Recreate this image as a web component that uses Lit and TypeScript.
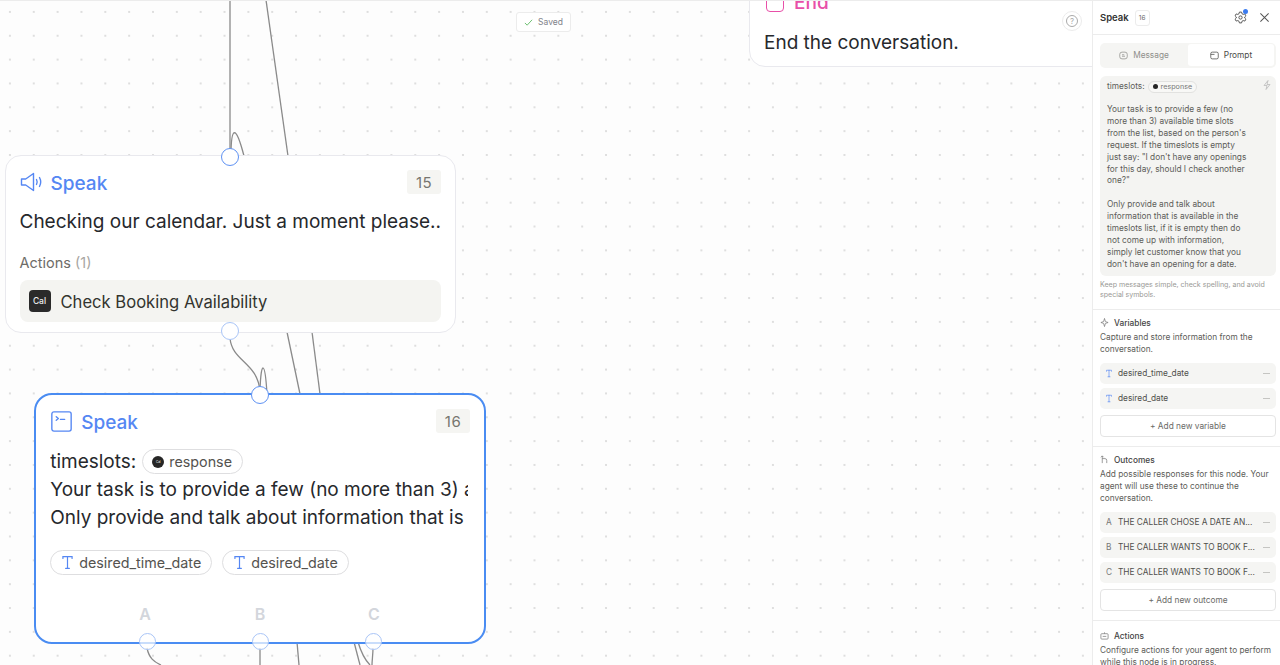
import { LitElement, html, css, svg } from "lit";
import { customElement } from "lit/decorators.js";

const speaker = html`<svg class="ic24" viewBox="0 0 24 24" fill="none" stroke="currentColor" stroke-width="1.4" stroke-linejoin="round" stroke-linecap="round"><path d="M1.5 9h4.2L13.5 3.5v17L5.700 15H1.500z"/><path d="M16.500 9.500c.8 1.500.8 3.500 0 5"/><path d="M19.500 7.500c1.500 2.800 1.500 6.200 0 9"/></svg>`;
const terminal = html`<svg class="ic20" viewBox="0 0 20 20" fill="none" stroke="currentColor" stroke-width="1.300" stroke-linecap="round" stroke-linejoin="round"><rect x=".8" y=".8" width="18.400" height="18.400" rx="2"/><path d="M5 5.500l2 1.700-2 1.700M9 8h4"/></svg>`;
const tIcon = html`<svg class="t" viewBox="0 0 12 16" fill="none" stroke="currentColor" stroke-width="1.300" stroke-linecap="round"><path d="M1 3.500V1.500h10v2M6 1.500v13M4 14.500h4"/></svg>`;
const calChip = html`<span class="cal">Cal</span>`;

const rows = ["desired_time_date", "desired_date"];
const outcomes: [string, string][] = [
  ["A", "THE CALLER CHOSE A DATE AN..."],
  ["B", "THE CALLER WANTS TO BOOK F..."],
  ["C", "THE CALLER WANTS TO BOOK F..."],
];

@customElement("app-root")
export class AppRoot extends LitElement {
  static styles = css`
    :host { display: flex; width: 1280px; height: 665px; overflow: hidden; background: #fff; font-family: Inter, "Liberation Sans", sans-serif; color: #26282c; }
    * { box-sizing: border-box; }
    .canvas { position: relative; flex: 1; height: 665px; overflow: hidden; background-color: #fdfdfd; background-image: radial-gradient(circle, #cfcfcf 0.6px, transparent 0.9px); background-size: 23.85px 23.85px; background-position: -2px -1px; border-top: 1px solid #ececec; }
    .edges { position: absolute; left: 0; top: -1px; width: 1092px; height: 665px; }
    .node { position: absolute; background: #fff; border: 1px solid #e9e9ee; border-radius: 16px; }
    .n15 { left: 4.500px; top: 154px; width: 451.500px; height: 178px; padding: 14px 14px 0 14px; }
    .n16 { left: 34px; top: 392px; width: 452px; height: 251px; border: 2.800px solid #4a8cf2; border-radius: 18px; padding: 14px 14px 0 14.200px; }
    .end { left: 749px; top: -40px; width: 360px; height: 106px; padding: 0 14px; }
    .head { display: flex; align-items: center; gap: 7px; height: 24px; color: #5587f3; font-size: 19px; font-weight: 500; }
    .lbl { padding-top: 2px; }
    .ic24 { width: 24px; height: 24px; flex: none; }
    .ic20 { width: 21px; height: 21px; flex: none; margin: 0 2px 0 1px; }
    .num { margin-left: auto; width: 34px; height: 24px; background: #f5f5f2; border-radius: 3px; color: #77756f; font-size: 15px; font-weight: 400; display: flex; align-items: center; justify-content: center; letter-spacing: .5px; }
    .msg { margin-top: 14px; font-size: 19px; line-height: 28px; white-space: nowrap; color: #26282c; }
    .acts { margin-top: 17px; font-size: 14.500px; line-height: 20px; color: #6e6c68; }
    .acts span { color: #a8a6a2; }
    .actrow { margin-top: 7px; height: 42px; background: #f4f4f1; border-radius: 8px; display: flex; align-items: center; gap: 10px; padding-left: 9px; font-size: 16.600px; color: #33342f; width: 421px; }
    .actlabel { padding-top: 1px; }
    .cal { width: 22px; height: 22px; border-radius: 4px; background: #2a2a2a; color: #eee; font-size: 8.500px; font-weight: 500; display: flex; align-items: center; justify-content: center; }
    .body16 { margin-top: 14px; width: 418px; overflow: hidden; font-size: 19px; line-height: 28px; white-space: nowrap; }
    .tsrow { display: flex; align-items: center; gap: 6px; height: 29px; }
    .pill { display: inline-flex; align-items: center; height: 25px; border: 1px solid #dedee0; border-radius: 13px; color: #54534f; font-size: 14.300px; background: #fff; }
    .pill .dot { width: 12px; height: 12px; border-radius: 50%; background: #262626; color: #fff; font-size: 3px; display: flex; align-items: center; justify-content: center; margin-right: 5px; margin-left: 9px; }
    .resp { width: 101px; }
    .tags { margin-top: 18px; display: flex; gap: 10px; }
    .tags .pill { padding: 0 10px 0 11px; gap: 6px; }
    .t { width: 11px; height: 15px; color: #5587f3; flex: none; }
    .letter { position: absolute; top: 209px; width: 20px; text-align: center; font-size: 16px; font-weight: 600; color: #d3d6dc; }
    .la { left: 99px; } .lb { left: 214px; } .lc { left: 328px; }
    .h { position: absolute; width: 18px; height: 18px; border-radius: 50%; background: #fff; border: 1.500px solid #5f92f3; }
    .h1 { left: 221px; top: 147px; }
    .h2 { left: 221px; top: 321px; border-color: #a9c5f7; }
    .h3 { left: 251px; top: 385px; }
    .hb { top: 631.500px; background: rgba(255,255,255,.7); border-color: #a9c5f7; width: 17px; height: 17px; }
    .ha { left: 138.500px; } .hbb { left: 251.500px; } .hc { left: 364.500px; }
    .endhead { position: absolute; left: 16px; top: 29px; display: flex; align-items: center; gap: 10px; color: #e84fa8; font-size: 19px; font-weight: 500; line-height: 24px; }
    .endbox { width: 18px; height: 18px; border: 1.500px solid #e84fa8; border-radius: 4px; }
    .endtxt { position: absolute; left: 14px; top: 67px; font-size: 19px; line-height: 28px; }
    .help { position: absolute; left: 1062px; top: 10px; width: 20px; height: 20px; border-radius: 50%; background: #fff; border: 1px solid #ececec; display: flex; align-items: center; justify-content: center; color: #aaa; }
    .help i { width: 12px; height: 12px; border: 1px solid #aaa; border-radius: 50%; font-size: 8px; line-height: 10px; text-align: center; font-style: normal; }
    .saved { position: absolute; left: 516px; top: 11px; width: 55px; height: 20px; background: #fff; border: 1px solid #ececec; border-radius: 3px; display: flex; align-items: center; justify-content: center; gap: 5px; font-size: 8.500px; color: #81838a; }
    .saved svg { width: 9px; height: 9px; color: #6cc070; }

    .panel { width: 188px; flex: none; height: 665px; overflow: hidden; background: #fff; border-left: 1px solid #ececec; border-top: 1px solid #ececec; font-size: 8.300px; color: #5d5d59; }
    .phead { height: 34px; border-bottom: 1px solid #ececec; display: flex; align-items: center; padding: 0 10px 0 7px; }
    .ptitle { font-size: 9.500px; font-weight: 600; color: #333; }
    .pnum { margin-left: 6px; width: 15px; height: 16px; border: 1px solid #ececec; border-radius: 3px; font-size: 6.500px; color: #666; display: flex; align-items: center; justify-content: center; }
    .gearwrap { position: relative; margin-left: auto; width: 13px; height: 13px; color: #555; }
    .gearwrap svg { width: 13px; height: 13px; display: block; }
    .gearwrap b { position: absolute; right: -1px; top: -2px; width: 5px; height: 5px; border-radius: 50%; background: #3b7cf0; }
    .x { margin-left: 12px; width: 11px; height: 11px; color: #555; }
    .ppad { padding: 8px 4px 0 7px; }
    .tabs { display: flex; height: 25px; background: #f5f5f3; border-radius: 5px; padding: 1px 2px 2px 0; }
    .tab { flex: 1; display: flex; align-items: center; justify-content: center; gap: 5px; font-size: 8.300px; color: #8f8f8b; border-radius: 3px; }
    .tab svg { width: 9px; height: 9px; }
    .tab.on { background: #fff; color: #4a4a47; width: 86px; flex: none; }
    .box { position: relative; margin-top: 8px; height: 200px; background: #f4f4f2; border-radius: 6px; padding: 4px 7px; line-height: 11.900px; color: #5d5d59; }
    .boxts { display: flex; align-items: center; gap: 3px; height: 13px; }
    .smallpill { display: inline-flex; align-items: center; gap: 3px; height: 12px; border: 1px solid #e2e2e0; background: #f8f8f6; border-radius: 6px; padding: 0 4px; font-size: 7.200px; color: #777; }
    .smallpill i { width: 5px; height: 5px; border-radius: 50%; background: #262626; }
    .boxp { margin: 11px 0 0; white-space: pre-line; }
    .bolt { position: absolute; right: 5px; top: 4px; width: 8px; height: 10px; color: #bbb; }
    .help2 { margin: 4px 0 0; font-size: 7.050px; line-height: 9.800px; color: #9a9a96; }
    .sec { border-top: 1px solid #ececec; padding: 7px 4px 0 7px; }
    .s1 { margin-top: 9px; height: 137px; }
    .s2 { height: 174px; }
    .s3 { height: 60px; padding-top: 9px; }
    .stitle { display: flex; align-items: center; gap: 5px; height: 12px; font-size: 8.300px; font-weight: 500; color: #444; margin-bottom: 2px; }
    .stitle svg { width: 9px; height: 9px; color: #777; flex: none; }
    .desc { line-height: 12px; margin: 0; }
    .rows { display: flex; flex-direction: column; gap: 4px; margin-top: 8px; }
    .row { height: 21px; background: #f5f5f3; border-radius: 5px; display: flex; align-items: center; padding: 0 6px; gap: 6px; font-size: 8.300px; color: #4f4f4b; white-space: nowrap; }
    .row .t { width: 6px; height: 9px; }
    .row em { margin-left: auto; width: 7px; height: 1px; background: #c5c5c2; }
    .ltr { color: #777; width: 6px; }
    .add { margin-top: 6px; height: 22px; width: 176px; border: 1px solid #e4e4e4; border-radius: 4px; background: #fff; display: flex; align-items: center; justify-content: center; font-size: 8.300px; color: #6a6a67; }
  `;

  render() {
    return html`
      <div class="canvas">
        <svg class="edges" viewBox="0 0 1092 665" fill="none" stroke="#8a8a8a" stroke-width="1.300">
          ${svg`<path d="M230 0V156"/>
          <path d="M266 0L288 156"/>
          <path d="M231 156C231 125 236 125 244 156"/>
          <path d="M230 338C232 362 258 362 260 392"/>
          <path d="M260 390C261 360 265 360 267 394"/>
          <path d="M287 332L300 394"/>
          <path d="M312 332L320 394"/>
          <path d="M147 648C149 658 154 662 161 665"/>
          <path d="M260 648V665"/>
          <path d="M297 642L299 665"/>
          <path d="M354 642L360 665"/>
          <path d="M358 642C361 652 365 660 370 665"/>
          <path d="M373 648C373 655 372 660 372 665"/>`}
        </svg>

        <div class="saved"><svg viewBox="0 0 10 10" fill="none" stroke="currentColor" stroke-width="1.100"><path d="M1 5.500l2.500 2.500L9 2"/></svg>Saved</div>

        <div class="node end">
          <div class="endhead"><span class="endbox"></span>End</div>
          <div class="endtxt">End the conversation.</div>
        </div>
        <div class="help"><i>?</i></div>

        <div class="node n15">
          <div class="head">${speaker}<span class="lbl">Speak</span><span class="num">15</span></div>
          <div class="msg">Checking our calendar. Just a moment please..</div>
          <div class="acts">Actions <span>(1)</span></div>
          <div class="actrow">${calChip}<span class="actlabel">Check Booking Availability</span></div>
        </div>

        <div class="node n16">
          <div class="head">${terminal}<span class="lbl">Speak</span><span class="num">16</span></div>
          <div class="body16">
            <div class="tsrow">timeslots: <span class="pill resp"><span class="dot">Cal</span>response</span></div>
            <div>Your task is to provide a few (no more than 3) available time slots</div>
            <div>Only provide and talk about information that is available in the</div>
          </div>
          <div class="tags">
            ${rows.map((r) => html`<span class="pill">${tIcon}${r}</span>`)}
          </div>
          <span class="letter la">A</span><span class="letter lb">B</span><span class="letter lc">C</span>
        </div>

        <span class="h h1"></span><span class="h h2"></span><span class="h h3"></span>
        <span class="h hb ha"></span><span class="h hb hbb"></span><span class="h hb hc"></span>
      </div>

      <aside class="panel">
        <div class="phead">
          <span class="ptitle">Speak</span><span class="pnum">16</span>
          <span class="gearwrap"><svg viewBox="0 0 24 24" fill="none" stroke="currentColor" stroke-width="1.800" stroke-linejoin="round"><path d="M10 2h4l.7 3 2.300 1.300 3-.9 2 3.500-2.200 2.100v2l2.200 2.100-2 3.500-3-.9L14.700 19l-.7 3h-4l-.7-3L7 17.700l-3 .9-2-3.500L4.200 13v-2L2 8.900l2-3.500 3 .9L9.300 5z"/><circle cx="12" cy="12" r="3"/></svg><b></b></span>
          <svg class="x" viewBox="0 0 12 12" fill="none" stroke="currentColor" stroke-width="1.100"><path d="M1.500 1.500l9 9M10.500 1.500l-9 9"/></svg>
        </div>
        <div class="ppad">
          <div class="tabs">
            <div class="tab"><svg viewBox="0 0 12 12" fill="none" stroke="currentColor"><rect x="1" y="1.500" width="10" height="9" rx="3"/><path d="M4 5h3M4 7h4"/></svg>Message</div>
            <div class="tab on"><svg viewBox="0 0 12 12" fill="none" stroke="currentColor"><rect x="1" y="1.500" width="10" height="9" rx="2"/><path d="M1 4.500h5"/></svg>Prompt</div>
          </div>
          <div class="box">
            <div class="boxts">timeslots: <span class="smallpill"><i></i>response</span></div>
            <svg class="bolt" viewBox="0 0 8 10" fill="none" stroke="currentColor" stroke-width=".8"><path d="M5 .5L1 5.500h3L3 9.500l4-5H4z"/></svg>
            <p class="boxp">Your task is to provide a few (no
more than 3) available time slots
from the list, based on the person's
request. If the timeslots is empty
just say: "I don't have any openings
for this day, should I check another
one?"

Only provide and talk about
information that is available in the
timeslots list, if it is empty then do
not come up with information,
simply let customer know that you
don't have an opening for a date.</p>
          </div>
          <p class="help2">Keep messages simple, check spelling, and avoid special symbols.</p>
        </div>

        <section class="sec s1">
          <div class="stitle"><svg viewBox="0 0 10 10" fill="none" stroke="currentColor" stroke-width=".8"><path d="M5 .5L6 4l3 1-3 1-1 3.500L4 6 1 5l3-1z"/></svg>Variables</div>
          <p class="desc">Capture and store information from the conversation.</p>
          <div class="rows">${rows.map((r) => html`<div class="row">${tIcon}${r}<em></em></div>`)}</div>
          <div class="add">+ Add new variable</div>
        </section>

        <section class="sec s2">
          <div class="stitle"><svg viewBox="0 0 10 10" fill="none" stroke="currentColor" stroke-width=".8"><path d="M2.500 9V1M1 2.500L2.500 1 4 2.500M2.500 4h3a2 2 0 0 1 2 2v3"/></svg>Outcomes</div>
          <p class="desc">Add possible responses for this node. Your agent will use these to continue the conversation.</p>
          <div class="rows">${outcomes.map(([l, t]) => html`<div class="row"><span class="ltr">${l}</span>${t}<em></em></div>`)}</div>
          <div class="add">+ Add new outcome</div>
        </section>

        <section class="sec s3">
          <div class="stitle"><svg viewBox="0 0 10 10" fill="none" stroke="currentColor" stroke-width=".8"><rect x="1" y="3" width="8" height="6" rx="1"/><path d="M5 3V1.500M3 6h4"/></svg>Actions</div>
          <p class="desc">Configure actions for your agent to perform while this node is in progress.</p>
        </section>
      </aside>
    `;
  }
}
